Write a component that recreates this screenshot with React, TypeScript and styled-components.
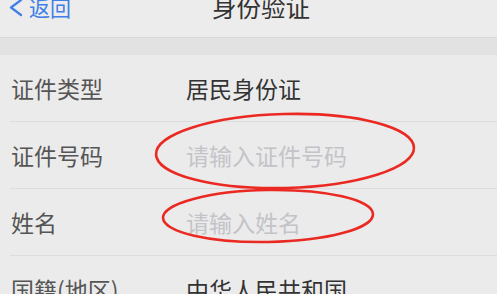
import styled, { createGlobalStyle } from 'styled-components';

const GlobalStyle = createGlobalStyle`
  html, body {
    margin: 0;
    padding: 0;
    background: #ebebeb;
    overflow: hidden;
  }
  body {
    font-family: "Noto Sans CJK SC", "Noto Sans", sans-serif;
  }
`;

interface Field {
  label: string;
  value: string;
  placeholder?: boolean;
}

const fields: Field[] = [
  { label: '证件类型', value: '居民身份证' },
  { label: '证件号码', value: '请输入证件号码', placeholder: true },
  { label: '姓名', value: '请输入姓名', placeholder: true },
  { label: '国籍(地区)', value: '中华人民共和国' },
];

export default function App() {
  return (
    <>
      <GlobalStyle />
      <Page>
        <NavBar>
          <BackButton>
            <svg width="14" height="18" viewBox="0 0 14 18" aria-hidden>
              <path d="M12 1 L2 8.5 L12 16" fill="none" stroke="#3f7fe6" strokeWidth="2.2" strokeLinecap="round" strokeLinejoin="round" />
            </svg>
            <span>返回</span>
          </BackButton>
          <Title>身份验证</Title>
        </NavBar>
        <Band />
        <List>
          {fields.map(f => (
            <Row key={f.label}>
              <Label>{f.label}</Label>
              <Value $placeholder={f.placeholder}>{f.value}</Value>
            </Row>
          ))}
          <Marks viewBox="0 0 497 238" aria-hidden>
            <ellipse cx="285" cy="96" rx="129" ry="37" transform="rotate(-1.5 285 96)" />
            <ellipse cx="268" cy="161" rx="105" ry="26" transform="rotate(-1 268 161)" />
          </Marks>
        </List>
      </Page>
    </>
  );
}

const Page = styled.div`
  width: 497px;
  height: 294px;
  overflow: hidden;
  background: #ebebeb;
`;

const NavBar = styled.div`
  display: flex;
  align-items: center;
  height: 38px;
  box-sizing: border-box;
  padding: 0 0 22px 9px;
  border-bottom: 1px solid #d9d9d9;
  background: #ececec;
`;

const BackButton = styled.div`
  display: flex;
  align-items: center;
  gap: 6px;
  color: #3f7fe6;
  font-size: 21px;
  line-height: 1;

  svg {
    flex: none;
  }
`;

const Title = styled.div`
  margin-left: 141px;
  font-size: 24.5px;
  line-height: 1;
  color: #333;
`;

const Band = styled.div`
  height: 17px;
  background: #e2e2e2;
`;

const List = styled.div`
  position: relative;
  padding-left: 10px;
`;

const Row = styled.div`
  display: flex;
  align-items: center;
  height: 66px;
  border-bottom: 1px solid #dcdcdc;
  font-size: 23px;
`;

const Label = styled.div`
  width: 175px;
  flex: none;
  padding-left: 1px;
  color: #555;
`;

const Value = styled.div<{ $placeholder?: boolean }>`
  color: ${({ $placeholder }) => ($placeholder ? '#c3c3c8' : '#333')};
`;

const Marks = styled.svg`
  position: absolute;
  top: 0;
  left: 0;
  width: 497px;
  height: 238px;
  pointer-events: none;

  ellipse {
    fill: none;
    stroke: #ea2a22;
    stroke-width: 2.6;
  }
`;
